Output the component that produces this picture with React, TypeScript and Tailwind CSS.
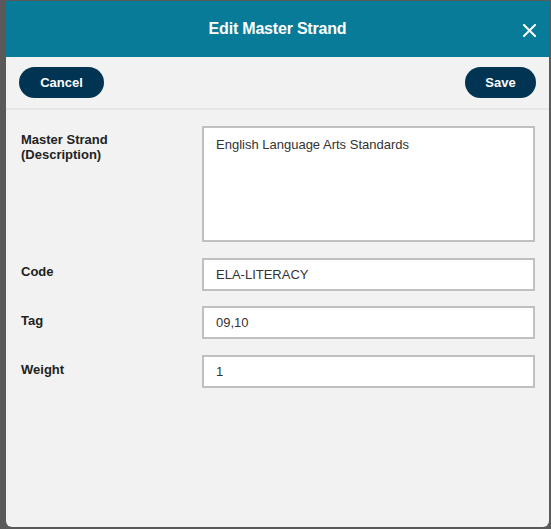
import React from "react";

const font = { fontFamily: '"Liberation Sans", Arial, sans-serif' };

function Row({ label, children, labelPad = "pt-[6px]" }: { label: React.ReactNode; children: React.ReactNode; labelPad?: string }) {
  return (
    <div className="flex">
      <div className={`w-[181px] shrink-0 text-[13px] font-bold leading-[15px] text-[#222] ${labelPad}`}>{label}</div>
      <div className="flex-1">{children}</div>
    </div>
  );
}

export default function App() {
  return (
    <div className="w-[551px] h-[529px] bg-[#595959] pl-[6px] pt-[1px] pr-[2px] pb-[2px] overflow-hidden" style={font}>
      <div className="h-full flex flex-col bg-[#f2f2f2] rounded-b-[6px] overflow-hidden">
        <div className="h-[56px] shrink-0 bg-[#077b98] relative flex items-center justify-center">
          <span className="text-white font-bold text-[16px] tracking-[-0.2px]">Edit Master Strand</span>
          <svg className="absolute right-[13px] top-[23px]" width="13" height="13" viewBox="0 0 13 13">
            <path d="M1 1L12 12M12 1L1 12" stroke="white" strokeWidth="2" strokeLinecap="square" />
          </svg>
        </div>
        <div className="h-[53px] shrink-0 flex items-start justify-between px-[13px] pt-[10px] border-b-2 border-[#e3e6e9]">
          <button className="h-[31px] w-[85px] rounded-full bg-[#003452] text-white font-bold text-[13px]">Cancel</button>
          <button className="h-[31px] w-[71px] rounded-full bg-[#003452] text-white font-bold text-[13px]">Save</button>
        </div>
        <div className="flex flex-col pl-[15px] pr-[14px] pt-[16px]">
          <Row label={<>Master Strand<br />(Description)</>} labelPad="pt-[6px]">
            <div className="h-[116px] bg-white border-2 border-[#c0c0c0] px-[12px] pt-[7px] text-[13px] text-[#333]">
              English Language Arts Standards
            </div>
          </Row>
          <div className="mt-[16px]">
            <Row label="Code">
              <div className="h-[33px] bg-white border-2 border-[#c0c0c0] px-[12px] flex items-center text-[13px] text-[#333]">ELA-LITERACY</div>
            </Row>
          </div>
          <div className="mt-[15px]">
            <Row label="Tag" labelPad="pt-[7px]">
              <div className="h-[33px] bg-white border-2 border-[#c0c0c0] px-[12px] flex items-center text-[13px] text-[#333]">09,10</div>
            </Row>
          </div>
          <div className="mt-[16px]">
            <Row label="Weight" labelPad="pt-[7px]">
              <div className="h-[33px] bg-white border-2 border-[#c0c0c0] px-[12px] flex items-center text-[13px] text-[#333]">1</div>
            </Row>
          </div>
        </div>
      </div>
    </div>
  );
}
